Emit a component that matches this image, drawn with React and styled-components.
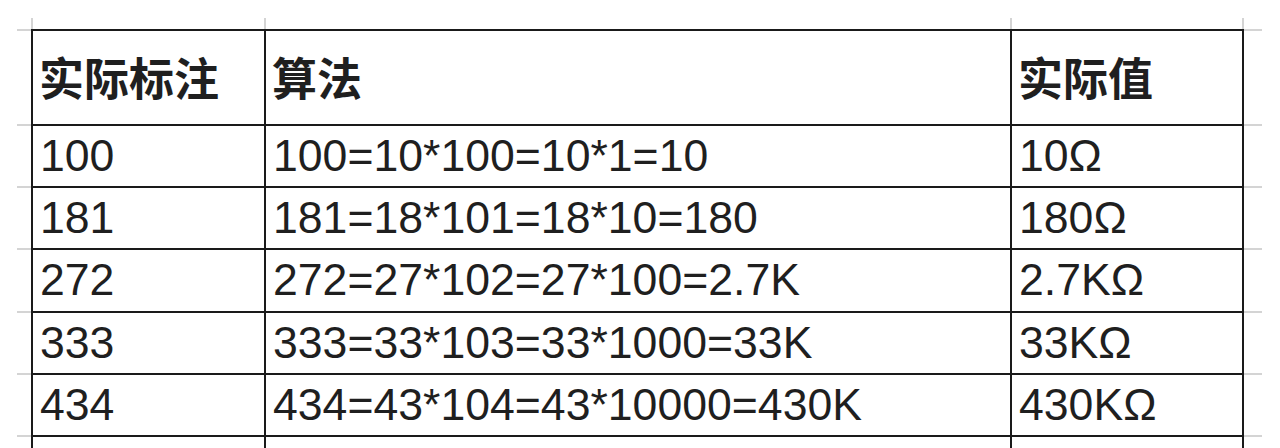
import React from "react";
import styled, { createGlobalStyle } from "styled-components";

const Global = createGlobalStyle`
  html, body { margin: 0; padding: 0; background: #ffffff; }
  body { font-family: "Liberation Sans", Arial, "Noto Sans CJK SC", sans-serif; }
  #root { width: 1280px; height: 448px; overflow: hidden; }
`;

const Page = styled.div`
  padding: 18px 0 0 17px;
  background: #ffffff;
`;

const Sheet = styled.div`
  display: grid;
  grid-template-columns: 14px 235px 746px 232px 18px;
  grid-template-rows: 11px 97px 62px 62px 63px 62px 62px 40px;
`;

const GRID = "#d4d4d4";
const INK = "#1a1a1a";

const Corner = styled.div``;

const TopGutter = styled.div`
  border-right: 2px solid ${GRID};
  border-left: ${(p) => (p.$first ? `2px solid ${GRID}` : "none")};
`;

const SideGutter = styled.div`
  border-bottom: 2px solid ${GRID};
  border-top: ${(p) => (p.$top ? `2px solid ${GRID}` : "none")};
`;

const Cell = styled.div`
  display: flex;
  align-items: center;
  padding: ${(p) => (p.$head ? "0 6px 2px" : "0 7px")};
  border-right: 2px solid ${INK};
  border-bottom: 2px solid ${INK};
  border-left: ${(p) => (p.$first ? `2px solid ${INK}` : "none")};
  border-top: ${(p) => (p.$head ? `2px solid ${INK}` : "none")};
  font-family: ${(p) =>
    p.$head
      ? `"Noto Sans CJK SC", "Liberation Sans", sans-serif`
      : `"Liberation Sans", Arial, "Noto Sans CJK SC", sans-serif`};
  font-weight: ${(p) => (p.$head ? 700 : 400)};
  font-size: ${(p) => (p.$head ? "45px" : "44.6px")};
  line-height: 1;
  color: #1f1f1f;
  white-space: nowrap;
  overflow: hidden;
`;

const header = ["实际标注", "算法", "实际值"];
const rows = [
  ["100", "100=10*100=10*1=10", "10Ω"],
  ["181", "181=18*101=18*10=180", "180Ω"],
  ["272", "272=27*102=27*100=2.7K", "2.7KΩ"],
  ["333", "333=33*103=33*1000=33K", "33KΩ"],
  ["434", "434=43*104=43*10000=430K", "430KΩ"],
  ["", "", ""],
];

export default function App() {
  return (
    <>
      <Global />
      <Page>
        <Sheet>
          <Corner />
          <TopGutter $first />
          <TopGutter />
          <TopGutter />
          <Corner />

          <SideGutter $top />
          {header.map((h, i) => (
            <Cell key={h} $head $first={i === 0}>
              {h}
            </Cell>
          ))}
          <SideGutter $top />

          {rows.map((r, ri) => (
            <React.Fragment key={ri}>
              <SideGutter />
              {r.map((c, ci) => (
                <Cell key={ci} $first={ci === 0}>
                  {c}
                </Cell>
              ))}
              <SideGutter />
            </React.Fragment>
          ))}
        </Sheet>
      </Page>
    </>
  );
}
